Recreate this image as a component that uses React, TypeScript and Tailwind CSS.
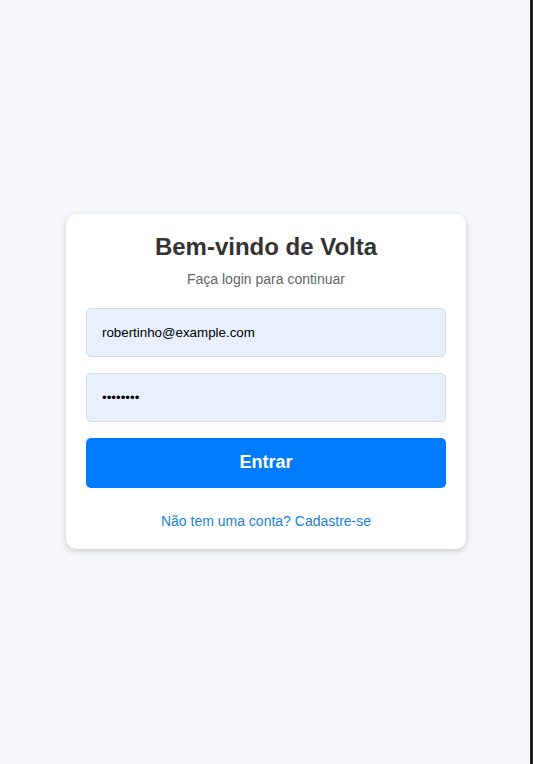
import { useState } from "react";

const LoginCard = () => {
  const [email, setEmail] = useState("robertinho@example.com");
  const [password, setPassword] = useState("12345678");

  return (
    <div className="w-[400px] bg-white rounded-[10px] shadow-[0_2px_6px_rgba(0,0,0,0.18)] px-5 pt-[19px] pb-[19px] text-center">
      <h2 className="text-[24px] leading-[28px] font-bold text-[#333333]">
        Bem-vindo de Volta
      </h2>
      <p className="mt-[10px] text-[14px] leading-[17px] text-[#666666]">
        Faça login para continuar
      </p>

      <form
        className="mt-[20px] flex flex-col gap-[16px]"
        onSubmit={(e) => e.preventDefault()}
      >
        <input
          type="email"
          value={email}
          onChange={(e) => setEmail(e.target.value)}
          className="h-[49px] w-full rounded-[5px] border border-[#d6dbe3] bg-[#e8f0fe] px-[15px] text-[13.33px] text-black outline-none"
        />
        <input
          type="password"
          value={password}
          onChange={(e) => setPassword(e.target.value)}
          className="h-[49px] w-full rounded-[5px] border border-[#d6dbe3] bg-[#e8f0fe] px-[15px] text-[13.33px] text-black outline-none"
        />
        <button
          type="submit"
          className="h-[50px] w-full rounded-[5px] bg-[#007bff] text-[18px] font-bold text-white"
        >
          Entrar
        </button>
      </form>

      <p className="mt-[25px] text-[14px] leading-[17px]">
        <a href="#" className="text-[#1a7fd9]">
          Não tem uma conta? Cadastre-se
        </a>
      </p>
    </div>
  );
};

const App = () => {
  return (
    <div className="flex min-h-screen bg-[#f5f7fa] font-['Liberation_Sans',Arial,sans-serif]">
      <div className="flex flex-1 items-center justify-center pl-[2px] pb-[2px]">
        <LoginCard />
      </div>
      <div className="w-[3px] bg-[#1f1f1f]" />
    </div>
  );
};

export default App;
